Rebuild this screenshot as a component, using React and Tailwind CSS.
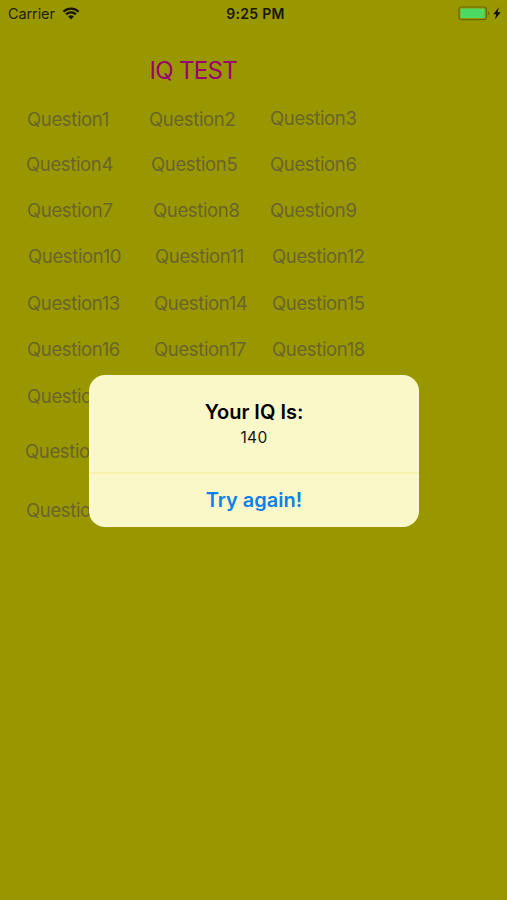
import React from 'react';
import { clsx } from 'clsx';

// Each label keeps its own small nudge, the columns are not perfectly aligned
const ROWS = [
    { height: 'h-[45px]', cells: [['Question1', 'ml-[2px]'], ['Question2', 'ml-0'], ['Question3', 'ml-0 -mt-px']] },
    { height: 'h-[46px]', cells: [['Question4', 'ml-px'], ['Question5', 'ml-[2px]'], ['Question6', 'ml-0']] },
    { height: 'h-[46px]', cells: [['Question7', 'ml-[2px]'], ['Question8', 'ml-[4px]'], ['Question9', 'ml-0']] },
    { height: 'h-[47px]', cells: [['Question10', 'ml-[3px]'], ['Question11', 'ml-[6px]'], ['Question12', 'ml-[2px]']] },
    { height: 'h-[46px]', cells: [['Question13', 'ml-[2px]'], ['Question14', 'ml-[5px]'], ['Question15', 'ml-[2px]']] },
    { height: 'h-[47px]', cells: [['Question16', 'ml-[2px]'], ['Question17', 'ml-[5px]'], ['Question18', 'ml-[2px]']] },
    { height: 'h-[55px]', cells: [['Question19', 'ml-[2px]']] },
    { height: 'h-[59px]', cells: [['Question22', 'ml-0']] },
    { height: 'h-[46px]', cells: [['Question25', 'ml-px']] },
];

const WifiIcon = () => (
    <svg width="18" height="13" viewBox="0 0 17 13" fill="none" stroke="#171600" strokeWidth="2.3">
        <path d="M0.9 4.7C5.1 0.5 11.9 0.5 16.1 4.7" />
        <path d="M3.6 7.4C6.3 4.7 10.7 4.7 13.4 7.4" />
        <path d="M8.5 12.4L5.6 9.5C7.2 7.9 9.8 7.9 11.4 9.5Z" fill="#171600" stroke="none" />
    </svg>
);

const BatteryIcon = () => (
    <svg width="44" height="15" viewBox="0 0 44 15" fill="none">
        <rect x="0.9" y="1" width="27.4" height="12.6" rx="2.6" stroke="#6b6900" strokeWidth="1.2" />
        <rect x="2.4" y="2.5" width="24.4" height="9.6" rx="1.2" fill="#4cd964" />
        <path d="M29.8 5.2C31.9 5.8 31.9 8.8 29.8 9.4Z" fill="#6b6900" />
        <path d="M40.9 1.2L35.3 8.2H38.3L36.9 13.4L42.7 6.3H39.5Z" fill="#0c0c00" />
    </svg>
);

const StatusBar = () => (
    <div className="grid h-[27px] grid-cols-3 items-center pl-2 pr-[5px] text-[14.5px] leading-none text-[#242200]">
        <div className="flex items-center gap-[7px]">
            <span className="pt-[2px] tracking-[-0.1px]">Carrier</span>
            <WifiIcon />
        </div>
        <span className="pl-px text-center text-[14px] font-semibold tracking-[0.3px] text-[#171600]">9:25 PM</span>
        <div className="flex justify-end">
            <BatteryIcon />
        </div>
    </div>
);

const Alert = ({ title, message, action }) => (
    <div className="absolute inset-0 flex items-start justify-center pt-[375px]">
        <div role="alertdialog" className="flex h-[152px] w-[330px] flex-col overflow-hidden rounded-[16px] bg-[#faf8c8]">
            <div className="flex h-[97px] flex-col items-center pl-px pt-6">
                <h2 className="text-[20px] font-semibold leading-[26px] text-black">{title}</h2>
                <p className="text-[15.5px] leading-[26px] tracking-[0.3px] text-[#16150a]">{message}</p>
            </div>
            <button className="flex-1 border-t-2 border-[#f5f2ac] pb-px pl-px text-[20px] font-semibold text-[#117fea]">{action}</button>
        </div>
    </div>
);

export default function App() {
    return (
        <div className="relative h-[900px] w-full overflow-hidden bg-[#999700] font-['Inter',sans-serif]">
            <StatusBar />
            <h1 className="mt-[29px] pl-[149.5px] text-[24px] leading-[30px] tracking-[-0.7px] text-[#99006e]">IQ TEST</h1>
            <div className="mt-[21px] flex flex-col pl-[25px] text-[18.5px] leading-6 tracking-[-0.35px] text-[#6b642a]">
                {ROWS.map(({ height, cells }) => (
                    <div key={cells[0][0]} className={clsx('grid grid-cols-[124px_121px_1fr] items-start', height)}>
                        {cells.map(([label, nudge]) => (
                            <button key={label} className={clsx('text-left', nudge)}>{label}</button>
                        ))}
                    </div>
                ))}
            </div>
            <Alert title="Your IQ Is:" message="140" action="Try again!" />
        </div>
    );
}
